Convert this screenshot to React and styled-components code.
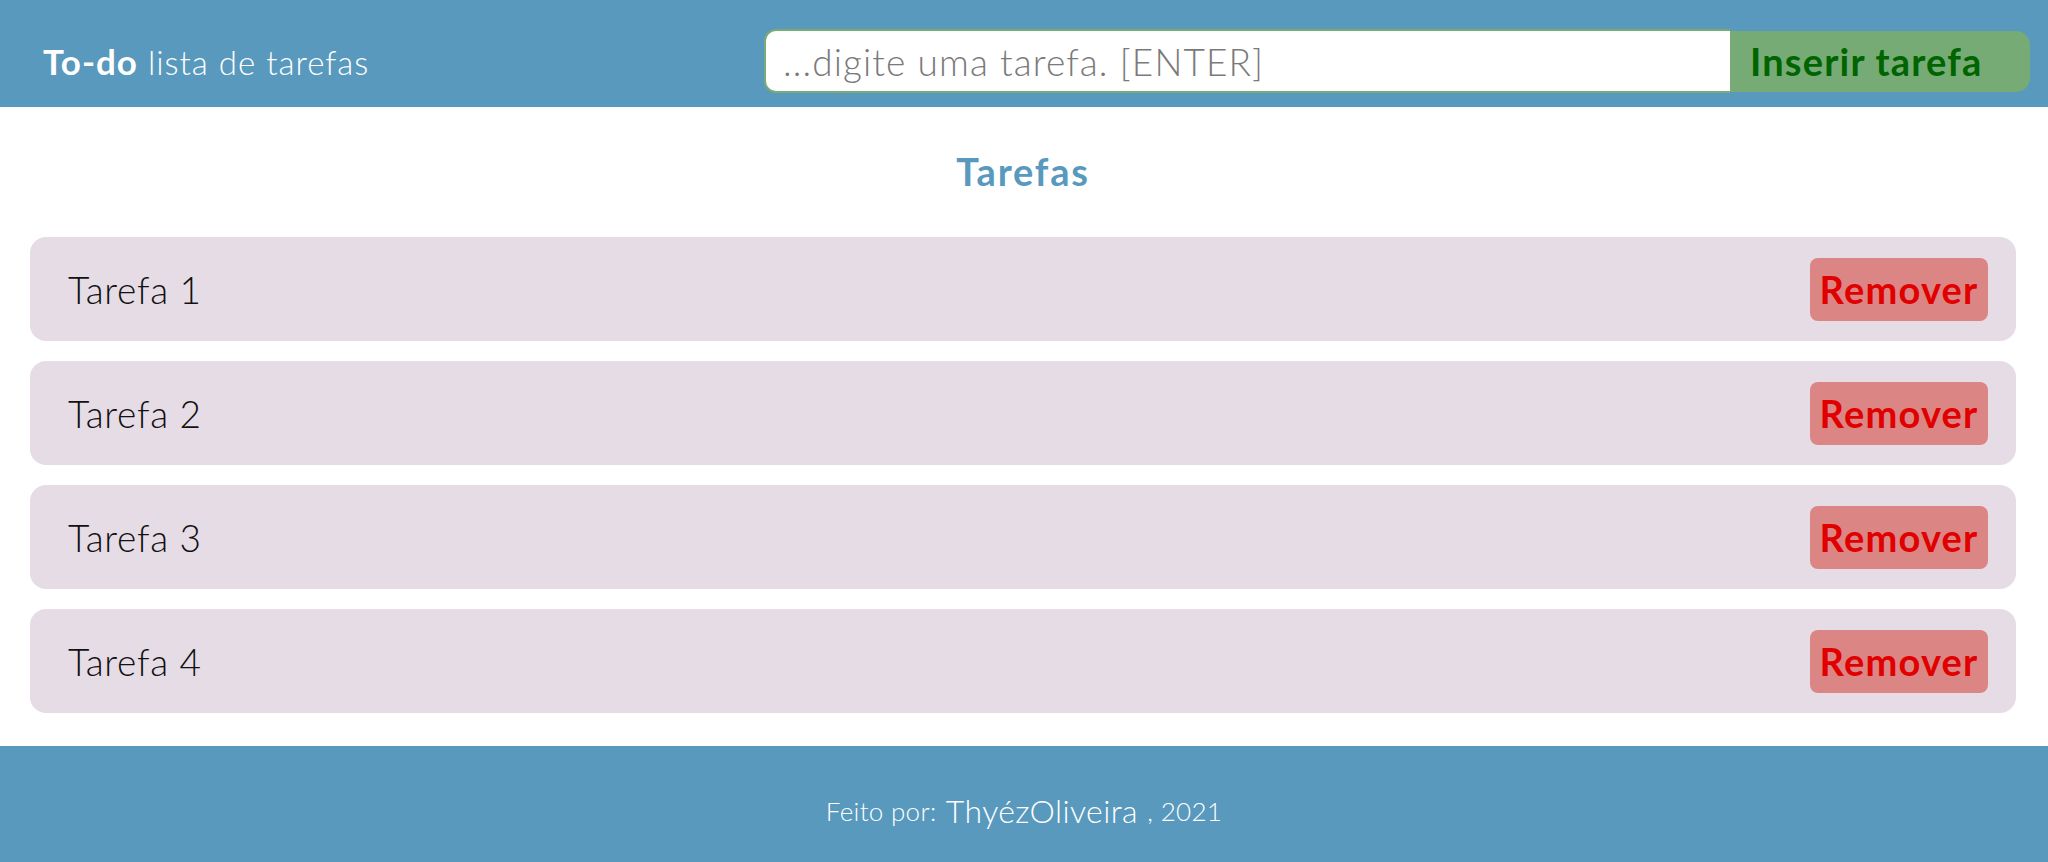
import React from 'react'
import styled, { createGlobalStyle } from 'styled-components'

const GlobalStyle = createGlobalStyle`
    * { box-sizing: border-box; }
    body {
        margin: 0;
        font-family: Lato, "Noto Sans", sans-serif;
        background: #fff;
    }
`

const tasks = ['Tarefa 1', 'Tarefa 2', 'Tarefa 3', 'Tarefa 4']

function App() {
    return (
        <>
            <GlobalStyle />
            <Header>
                <Title>
                    <strong>To-do</strong> lista de tarefas
                </Title>
                <Form onSubmit={e => e.preventDefault()}>
                    <Input placeholder="...digite uma tarefa. [ENTER]" />
                    <AddButton type="submit">Inserir tarefa</AddButton>
                </Form>
            </Header>
            <Main>
                <Heading>Tarefas</Heading>
                <List>
                    {tasks.map(t => (
                        <Item key={t}>
                            <span>{t}</span>
                            <RemoveButton>Remover</RemoveButton>
                        </Item>
                    ))}
                </List>
            </Main>
            <Footer>
                Feito por: <Author>ThyézOliveira</Author> , 2021
            </Footer>
        </>
    )
}

const Header = styled.header`
    height: 107px;
    background-color: #5899bd;
    display: flex;
    align-items: center;
    justify-content: space-between;
    padding: 15px 18px 0 43px;
`

const Title = styled.h1`
    margin: 0;
    color: #fff;
    font-size: 33px;
    font-weight: 300;
    letter-spacing: 1px;
    strong {
        font-weight: 700;
        font-size: 35px;
    }
`

const Form = styled.form`
    display: flex;
    align-items: center;
`

const Input = styled.input`
    width: 966px;
    height: 64px;
    border: 2px solid #79ab74;
    border-right: none;
    border-radius: 12px 0 0 12px;
    padding: 0 17px;
    font-family: Lato, "Noto Sans", sans-serif;
    font-size: 37px;
    font-weight: 300;
    letter-spacing: 1.1px;
    outline: none;
    &::placeholder {
        color: #7a7a7a;
    }
`

const AddButton = styled.button`
    width: 300px;
    height: 61px;
    border: none;
    border-left: 2px solid #79ab74;
    border-radius: 0 14px 14px 0;
    background-color: #76ab75;
    color: #006400;
    font-family: Lato, "Noto Sans", sans-serif;
    font-size: 38px;
    font-weight: 700;
    letter-spacing: 1.2px;
    text-align: left;
    padding: 0 0 0 18px;
    cursor: pointer;
`

const Main = styled.main`
    padding: 0 32px 33px 30px;
`

const Heading = styled.h2`
    margin: 0;
    height: 130px;
    display: flex;
    align-items: center;
    justify-content: center;
    padding-bottom: 2px;
    color: #5899bd;
    font-size: 38px;
    font-weight: 700;
    letter-spacing: 1.8px;
`

const List = styled.ul`
    list-style: none;
    margin: 0;
    padding: 0;
    display: flex;
    flex-direction: column;
    gap: 20px;
`

const Item = styled.li`
    height: 104px;
    background-color: #e6dce6;
    border-radius: 16px;
    display: flex;
    align-items: center;
    justify-content: space-between;
    padding: 0 28px 0 38px;
    span {
        color: #111;
        font-size: 37px;
        font-weight: 300;
        letter-spacing: 0.7px;
    }
`

const RemoveButton = styled.button`
    width: 178px;
    height: 63px;
    border: none;
    border-radius: 8px;
    background-color: #dc8585;
    color: #e00000;
    font-family: Lato, "Noto Sans", sans-serif;
    font-size: 38px;
    font-weight: 700;
    letter-spacing: 1.2px;
    padding: 0;
    cursor: pointer;
`

const Footer = styled.footer`
    height: 116px;
    background-color: #5899bd;
    color: #fff;
    display: flex;
    align-items: center;
    justify-content: center;
    padding-top: 14px;
    font-size: 26px;
    font-weight: 300;
    letter-spacing: 0.3px;
    white-space: pre;
`

const Author = styled.span`
    font-size: 32px;
    letter-spacing: 0.4px;
    margin: 0 2px 2px;
`

export default App
